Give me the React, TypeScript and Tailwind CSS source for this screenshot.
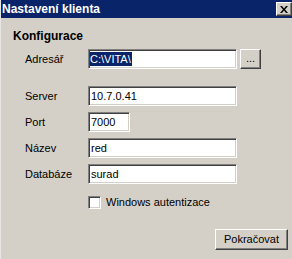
import React from "react";

const sunken =
  "border border-t-[#808080] border-l-[#808080] border-b-white border-r-white shadow-[inset_1px_1px_0_#404040,inset_-1px_-1px_0_#d4d0c8] bg-white";
const raised =
  "border border-t-white border-l-white border-b-[#404040] border-r-[#404040] shadow-[inset_-1px_-1px_0_#808080] bg-[#d4d0c8]";

function Row({ label, value, width, gap }: { label: string; value: string; width: string; gap: string }) {
  return (
    <div className={`flex items-center ${gap}`}>
      <span className="w-[75px] pl-[12px]">{label}</span>
      <div className={`${sunken} ${width} h-[20px] flex items-center px-[2px]`}>{value}</div>
    </div>
  );
}

export default function App() {
  return (
    <div className="w-[292px] h-[259px] bg-[#d4d0c8] text-[11px] text-black font-['Liberation_Sans',Arial,sans-serif] overflow-hidden border-l border-l-[#e8e6e2]">
      <div className="h-[18px] bg-[#0a246a] flex items-center justify-between pl-[1px]">
        <span className="text-white font-bold text-[12px] leading-none">Nastavení klienta</span>
        <div className={`${raised} w-[16px] h-[14px] flex items-center justify-center`}>
          <svg width="8" height="7" viewBox="0 0 8 7">
            <path d="M0 0h2l2 2.5L6 0h2L5 3.5 8 7H6L4 4.5 2 7H0l3-3.5z" fill="#000" />
          </svg>
        </div>
      </div>
      <div className="pl-[12px] pt-[10px]">
        <div className="font-bold text-[12px] leading-[16px]">Konfigurace</div>
        <div className="flex items-center mt-[5px]">
          <span className="w-[75px] pl-[12px]">Adresář</span>
          <div className={`${sunken} w-[149px] h-[20px] flex items-center px-[1px]`}>
            <span className="bg-[#0a246a] text-white leading-[14px] pr-[1px]">C:\VITA\</span>
          </div>
          <div className={`${raised} ml-[3px] w-[21px] h-[20px] flex items-end justify-center pb-[4px] leading-none`}>...</div>
        </div>
        <Row label="Server" value="10.7.0.41" width="w-[149px]" gap="mt-[17px]" />
        <Row label="Port" value="7000" width="w-[42px]" gap="mt-[6px]" />
        <Row label="Název" value="red" width="w-[149px]" gap="mt-[6px]" />
        <Row label="Databáze" value="surad" width="w-[149px]" gap="mt-[6px]" />
        <div className="flex items-center mt-[10px] ml-[75px] leading-[16px]">
          <div className={`${sunken} w-[13px] h-[13px]`} />
          <span className="ml-[5px]">Windows autentizace</span>
        </div>
        <div className="flex justify-end pr-[4px] mt-[19px]">
          <div className={`${raised} w-[73px] h-[21px] flex items-center justify-center`}>Pokračovat</div>
        </div>
      </div>
    </div>
  );
}
